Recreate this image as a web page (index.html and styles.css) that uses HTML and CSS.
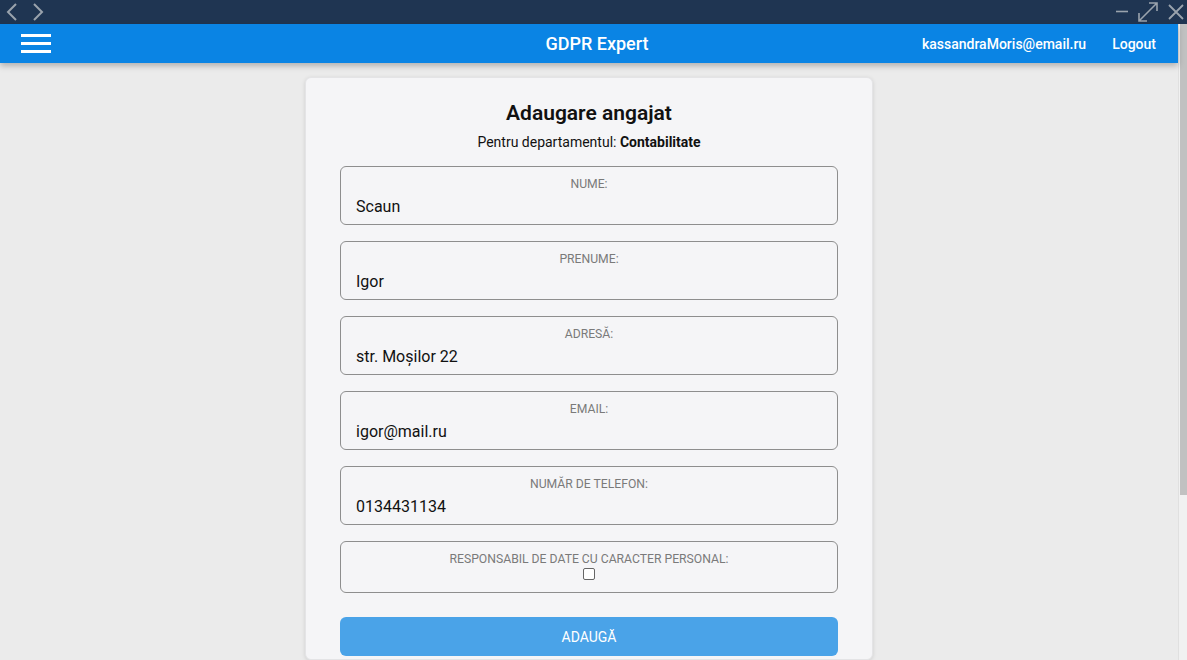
FILE: index.html
```html
<!DOCTYPE html>
<html lang="ro">
<head>
<meta charset="utf-8">
<title>GDPR Expert</title>
<link rel="stylesheet" href="styles.css">
</head>
<body>
<div class="titlebar">
  <div class="nav">
    <svg width="14" height="20" viewBox="0 0 14 20"><path d="M11 2 L3 10 L11 18" fill="none" stroke="#9aa3ad" stroke-width="2"/></svg>
    <svg width="14" height="20" viewBox="0 0 14 20"><path d="M3 2 L11 10 L3 18" fill="none" stroke="#9aa3ad" stroke-width="2"/></svg>
  </div>
  <div class="winctl">
    <svg width="14" height="20" viewBox="0 0 14 20"><path d="M1 9.5 H13" stroke="#9aa3ad" stroke-width="1.6"/></svg>
    <svg width="22" height="22" viewBox="0 0 22 22"><path d="M2 20 L20 2 M12 2 H20 V10 M2 12 V20 H10" fill="none" stroke="#9aa3ad" stroke-width="1.6"/></svg>
    <svg width="18" height="18" viewBox="0 0 18 18"><path d="M2 2 L16 16 M16 2 L2 16" stroke="#9aa3ad" stroke-width="1.8"/></svg>
  </div>
</div>
<div class="window">
  <div class="app">
    <header class="header">
      <div class="hamburger"><span></span><span></span><span></span></div>
      <div class="brand">GDPR Expert</div>
      <div class="user">
        <span class="email">kassandraMoris@email.ru</span>
        <span class="logout">Logout</span>
      </div>
    </header>
    <main class="main">
      <section class="card">
        <h1 class="title">Adaugare angajat</h1>
        <p class="subtitle">Pentru departamentul: <b>Contabilitate</b></p>
        <div class="fields">
          <div class="field"><div class="label">NUME:</div><div class="value">Scaun</div></div>
          <div class="field"><div class="label">PRENUME:</div><div class="value">Igor</div></div>
          <div class="field"><div class="label">ADRESĂ:</div><div class="value">str. Moșilor 22</div></div>
          <div class="field"><div class="label">EMAIL:</div><div class="value">igor@mail.ru</div></div>
          <div class="field"><div class="label">NUMĂR DE TELEFON:</div><div class="value">0134431134</div></div>
          <div class="field check"><div class="label">RESPONSABIL DE DATE CU CARACTER PERSONAL:</div><div class="box"></div></div>
        </div>
        <button class="submit">ADAUGĂ</button>
      </section>
    </main>
  </div>
  <div class="scrollbar"><div class="thumb"></div></div>
</div>
</body>
</html>
```
FILE: styles.css
```css
* { box-sizing: border-box; }
html, body { margin: 0; height: 660px; overflow: hidden; }
body {
  font-family: Roboto, "Liberation Sans", Arial, sans-serif;
  background: #ebebeb;
  color: #111;
}
.titlebar {
  height: 24px;
  background: #1f3552;
  display: flex;
  justify-content: space-between;
  align-items: center;
}
.nav { display: flex; gap: 12px; padding-left: 5px; }
.nav svg { display: block; }
.winctl { display: flex; align-items: center; gap: 8px; padding-right: 2px; }
.winctl svg { display: block; }
.window { display: flex; height: 636px; }
.app { flex: 1; display: flex; flex-direction: column; }
.scrollbar {
  width: 9px;
  background: #f1f1f1;
  padding-left: 1px;
  border-left: 1px solid #e0e0e0;
}
.thumb { height: 471px; background: #c1c1c1; }
.header {
  height: 39px;
  background: #0a84e4;
  color: #fff;
  display: grid;
  grid-template-columns: 1fr auto 1fr;
  align-items: center;
  padding: 0 22px 0 21px;
  box-shadow: 0 3px 6px rgba(0,0,0,0.25);
  position: relative;
  z-index: 1;
}
.hamburger { width: 30px; display: flex; flex-direction: column; gap: 5px; }
.hamburger span { height: 3px; background: #fff; display: block; }
.brand {
  text-align: center;
  font-size: 18px;
  font-weight: 500;
  padding-left: 17px;
}
.user { justify-self: end; display: flex; gap: 26px; font-size: 14px; font-weight: 500; }
.main { flex: 1; display: flex; justify-content: center; padding-top: 14px; }
.card {
  width: 568px;
  background: #f5f5f7;
  border: 1px solid #e4e4e6;
  border-radius: 6px;
  padding: 21px 34px 0 34px;
  box-shadow: 0 1px 4px rgba(0,0,0,0.12);
}
.title {
  margin: 0;
  text-align: center;
  font-size: 21px;
  font-weight: 600;
  line-height: 28px;
}
.subtitle {
  margin: 6px 0 0;
  text-align: center;
  font-size: 14px;
  line-height: 18px;
}
.subtitle b { font-weight: 700; }
.fields { margin-top: 15px; display: flex; flex-direction: column; gap: 16px; }
.field {
  border: 1px solid #8e8e8e;
  border-radius: 6px;
  padding: 10px 15px 9px;
  height: 59px;
}
.label {
  text-align: center;
  font-size: 12.2px;
  line-height: 15px;
  color: #7a7a7a;
}
.value {
  margin-top: 5px;
  font-size: 16px;
  line-height: 20px;
  color: #111;
}
.field.check { height: 52px; display: flex; flex-direction: column; align-items: center; }
.box {
  margin-top: 1px;
  width: 12px;
  height: 12px;
  border: 1px solid #666;
  border-radius: 2px;
  background: #fff;
}
.submit {
  margin-top: 24px;
  width: 100%;
  height: 39px;
  border: none;
  border-radius: 6px;
  background: #4aa3e8;
  color: #fff;
  font-family: inherit;
  font-size: 14px;
  padding: 0;
}
```
